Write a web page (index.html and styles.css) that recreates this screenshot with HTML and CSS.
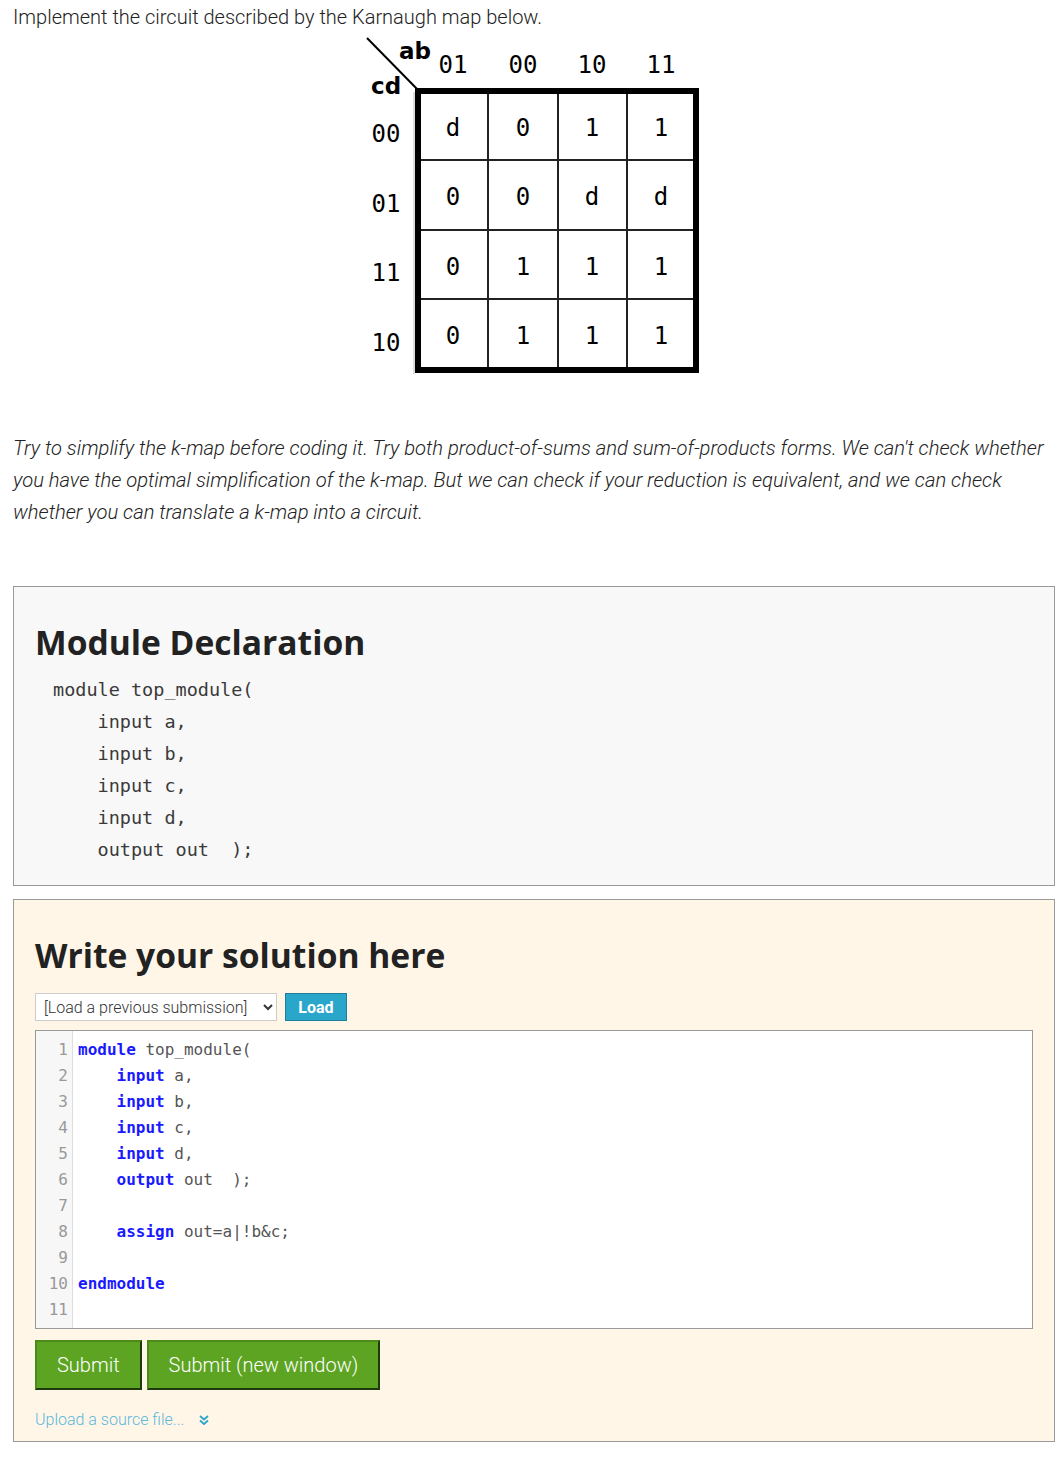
FILE: index.html
```html
<!DOCTYPE html>
<html>
<head>
<meta charset="utf-8">
<link rel="stylesheet" href="styles.css">
</head>
<body>
<div class="page">
  <p class="intro">Implement the circuit described by the Karnaugh map below.</p>
  <div class="kmap-wrap">
    <svg class="kmap" width="338" height="340" viewBox="0 0 338 340" xmlns="http://www.w3.org/2000/svg">
      <line x1="2" y1="2" x2="54" y2="55" stroke="#000" stroke-width="2"/>
      <text x="34" y="23" class="kv">ab</text>
      <text x="6" y="58" class="kv">cd</text>
      <text x="88" y="37" class="kh">01</text>
      <text x="158" y="37" class="kh">00</text>
      <text x="227" y="37" class="kh">10</text>
      <text x="296" y="37" class="kh">11</text>
      <text x="21" y="106" class="kh">00</text>
      <text x="21" y="176" class="kh">01</text>
      <text x="21" y="245" class="kh">11</text>
      <text x="21" y="315" class="kh">10</text>
      <line x1="50" y1="56" x2="334" y2="56" stroke="#bbb" stroke-width="1"/>
      <line x1="49" y1="56" x2="49" y2="338" stroke="#bbb" stroke-width="1"/>
      <g stroke="#222" stroke-width="2">
        <line x1="123" y1="57" x2="123" y2="333"/>
        <line x1="193" y1="57" x2="193" y2="333"/>
        <line x1="262" y1="57" x2="262" y2="333"/>
        <line x1="54" y1="124" x2="331" y2="124"/>
        <line x1="54" y1="194" x2="331" y2="194"/>
        <line x1="54" y1="263" x2="331" y2="263"/>
      </g>
      <rect x="53" y="55" width="278" height="279" fill="none" stroke="#000" stroke-width="6"/>
      <g class="kc">
        <text x="88" y="100">d</text><text x="158" y="100">0</text><text x="227" y="100">1</text><text x="296" y="100">1</text>
        <text x="88" y="169">0</text><text x="158" y="169">0</text><text x="227" y="169">d</text><text x="296" y="169">d</text>
        <text x="88" y="239">0</text><text x="158" y="239">1</text><text x="227" y="239">1</text><text x="296" y="239">1</text>
        <text x="88" y="308">0</text><text x="158" y="308">1</text><text x="227" y="308">1</text><text x="296" y="308">1</text>
      </g>
    </svg>
  </div>
  <p class="note">Try to simplify the k-map before coding it. Try both product-of-sums and sum-of-products forms. We can't check whether you have the optimal simplification of the k-map. But we can check if your reduction is equivalent, and we can check whether you can translate a k-map into a circuit.</p>

  <div class="panel decl">
    <h2>Module Declaration</h2>
<pre class="decl-code">module top_module(
    input a,
    input b,
    input c,
    input d,
    output out  );</pre>
  </div>

  <div class="panel solution">
    <h2>Write your solution here</h2>
    <div class="load-row">
      <select class="prev"><option>[Load a previous submission]</option></select>
      <button class="load-btn">Load</button>
    </div>
    <div class="editor">
      <div class="gutter">
        <div>1</div><div>2</div><div>3</div><div>4</div><div>5</div><div>6</div><div>7</div><div>8</div><div>9</div><div>10</div><div>11</div>
      </div>
      <div class="lines">
        <div class="ln"><span class="kw">module</span> top_module(</div>
        <div class="ln">    <span class="kw">input</span> a,</div>
        <div class="ln">    <span class="kw">input</span> b,</div>
        <div class="ln">    <span class="kw">input</span> c,</div>
        <div class="ln">    <span class="kw">input</span> d,</div>
        <div class="ln">    <span class="kw">output</span> out  );</div>
        <div class="ln"> </div>
        <div class="ln">    <span class="kw">assign</span> out=a|!b&amp;c;</div>
        <div class="ln"> </div>
        <div class="ln"><span class="kw">endmodule</span></div>
        <div class="ln"> </div>
      </div>
    </div>
    <div class="submit-row">
      <button class="submit">Submit</button>
      <button class="submit">Submit (new window)</button>
    </div>
    <div class="upload">
      <a class="upload-link">Upload a source file...</a>
      <svg class="chev" width="12" height="12" viewBox="0 0 12 12"><path d="M2 2 L6 5.5 L10 2 M2 6.5 L6 10 L10 6.5" fill="none" stroke="#2ba6cb" stroke-width="1.8"/></svg>
    </div>
  </div>
</div>
</body>
</html>
```
FILE: styles.css
```css
html, body {
  margin: 0;
  padding: 0;
  background: #fff;
}
body {
  font-family: Roboto, "Liberation Sans", sans-serif;
  font-weight: 300;
  color: #222;
}
.page {
  padding: 1px 9px 0 13px;
}
.intro {
  margin: 0;
  font-size: 20px;
  line-height: 32px;
}
.kmap-wrap {
  display: flex;
  justify-content: center;
  margin-top: 3px;
  height: 340px;
}
.kmap {
  display: block;
}
.kv {
  font-family: "DejaVu Sans", sans-serif;
  font-weight: bold;
  font-size: 23px;
}
.kh {
  font-family: "DejaVu Sans Mono", monospace;
  font-size: 24px;
  text-anchor: middle;
}
.kc text {
  font-family: "DejaVu Sans Mono", monospace;
  font-size: 24px;
  text-anchor: middle;
}
.note {
  margin: 56px 0 0;
  font-size: 20.2px;
  font-style: italic;
  line-height: 32px;
}
.panel {
  border: 1px solid #999;
  padding: 21px 21px 19px;
  margin-top: 58px;
}
.decl {
  background: #f8f8f8;
}
.solution {
  background: #fff6e8;
  margin-top: 13px;
  padding-bottom: 12px;
}
h2 {
  font-family: "Open Sans", sans-serif;
  font-weight: bold;
  font-size: 33.6px;
  line-height: 40px;
  margin: 14px 0 0;
  color: #222;
}
.decl-code {
  margin: 12px 0 0 18px;
  font-family: "DejaVu Sans Mono", monospace;
  font-size: 18.5px;
  line-height: 32px;
  color: #3a3a3a;
}
.load-row {
  display: flex;
  align-items: center;
  gap: 8px;
  margin-top: 18px;
}
.prev {
  width: 242px;
  height: 28px;
  font-family: Roboto, sans-serif;
  font-weight: 300;
  font-size: 16px;
  color: #333;
  border: 1px solid #ccc;
  background: #fff;
  padding: 0 2px 0 4px;
}
.load-btn {
  background: #2ba6cb;
  color: #fff;
  border: 1px solid #1e7d99;
  font-family: Roboto, sans-serif;
  font-weight: bold;
  font-size: 16px;
  height: 28px;
  width: 62px;
  padding: 0;
}
.editor {
  display: flex;
  margin-top: 9px;
  border: 1px solid #999;
  background: #fff;
  height: 297px;
  font-family: "DejaVu Sans Mono", monospace;
  font-size: 16px;
  line-height: 26px;
  width: 996px;
}
.gutter {
  width: 37px;
  background: #f7f7f7;
  border-right: 1px solid #ddd;
  color: #999;
  text-align: right;
  padding: 6px 4px 0 0;
  box-sizing: border-box;
  font-weight: 300;
}
.lines {
  padding: 6px 0 0 5px;
  color: #555;
}
.ln {
  white-space: pre;
  height: 26px;
}
.kw {
  color: #1a1aff;
  font-weight: bold;
}
.submit-row {
  display: flex;
  gap: 5px;
  margin-top: 11px;
}
.submit {
  background: #5da423;
  color: #fff;
  font-family: Roboto, sans-serif;
  font-weight: 300;
  font-size: 20px;
  height: 50px;
  padding: 0 20px;
  border: 2px solid #3d6b17;
  border-top-color: #4c8a1c;
  border-left-color: #4c8a1c;
  border-bottom-color: #1f3a0a;
  border-right-color: #1f3a0a;
}
.upload {
  display: flex;
  align-items: center;
  gap: 14px;
  margin-top: 20px;
}
.upload-link {
  color: #5bb8dc;
  font-size: 16px;
}
.chev {
  display: block;
}
```
